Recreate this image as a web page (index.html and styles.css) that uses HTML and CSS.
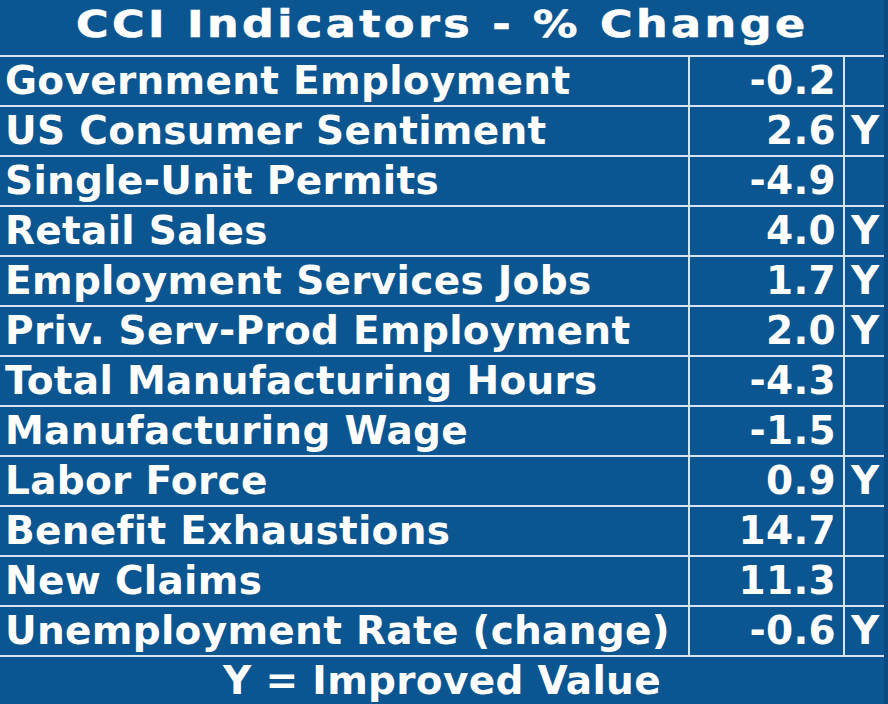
FILE: index.html
```html
<!DOCTYPE html>
<html>
<head>
<meta charset="utf-8">
<link rel="stylesheet" href="styles.css">
</head>
<body>
<div class="board">
  <div class="title"><span class="title-text">CCI Indicators - % Change</span></div>
  <div class="row"><div class="name">Government Employment</div><div class="val">-0.2</div><div class="flag"></div></div>
  <div class="row"><div class="name">US Consumer Sentiment</div><div class="val">2.6</div><div class="flag">Y</div></div>
  <div class="row"><div class="name">Single-Unit Permits</div><div class="val">-4.9</div><div class="flag"></div></div>
  <div class="row"><div class="name">Retail Sales</div><div class="val">4.0</div><div class="flag">Y</div></div>
  <div class="row"><div class="name">Employment Services Jobs</div><div class="val">1.7</div><div class="flag">Y</div></div>
  <div class="row"><div class="name">Priv. Serv-Prod Employment</div><div class="val">2.0</div><div class="flag">Y</div></div>
  <div class="row"><div class="name">Total Manufacturing Hours</div><div class="val">-4.3</div><div class="flag"></div></div>
  <div class="row"><div class="name">Manufacturing Wage</div><div class="val">-1.5</div><div class="flag"></div></div>
  <div class="row"><div class="name">Labor Force</div><div class="val">0.9</div><div class="flag">Y</div></div>
  <div class="row"><div class="name">Benefit Exhaustions</div><div class="val">14.7</div><div class="flag"></div></div>
  <div class="row"><div class="name">New Claims</div><div class="val">11.3</div><div class="flag"></div></div>
  <div class="row"><div class="name">Unemployment Rate (change)</div><div class="val">-0.6</div><div class="flag">Y</div></div>
  <div class="footer">Y = Improved Value</div>
</div>
</body>
</html>
```
FILE: styles.css
```css
html, body {
  margin: 0;
  padding: 0;
  background: #094a80;
  height: 704px;
  overflow: hidden;
}
.board {
  width: 884px;
  background: #0b5591;
  color: #ffffff;
  font-family: "DejaVu Sans", sans-serif;
  font-weight: bold;
}
.title {
  font-size: 37px;
  line-height: 50px;
  height: 50px;
  padding-bottom: 5px;
  text-align: center;
  white-space: nowrap;
}
.title-text {
  display: inline-block;
  letter-spacing: 2.9px;
  transform: scaleX(1.2);
  -webkit-text-stroke: 0.6px #ffffff;
}
.row {
  display: grid;
  grid-template-columns: 688px 155px 41px;
  border-top: 2px solid #d6e4f2;
  font-size: 39px;
  letter-spacing: 0.3px;
  line-height: 48px;
  height: 48px;
}
.name {
  padding-left: 5px;
  white-space: nowrap;
}
.val {
  border-left: 2px solid #d6e4f2;
  text-align: right;
  padding-right: 7px;
}
.flag {
  border-left: 2px solid #d6e4f2;
  padding-left: 6px;
}
.footer {
  border-top: 2px solid #d6e4f2;
  font-size: 39px;
  letter-spacing: 0.3px;
  line-height: 48px;
  height: 48px;
  text-align: center;
}
```
